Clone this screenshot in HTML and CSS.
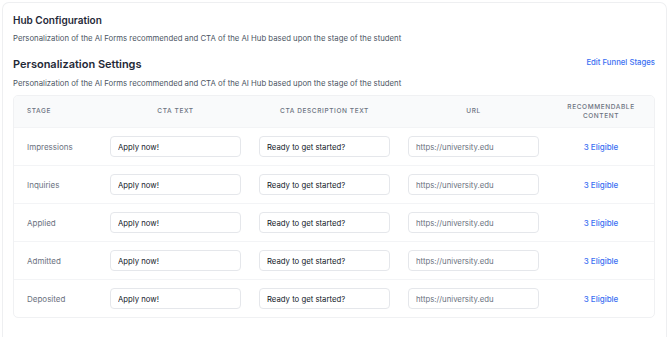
FILE: index.html
```html
<!DOCTYPE html>
<html lang="en">
<head>
    <meta charset="UTF-8">
    <meta name="viewport" content="width=device-width, initial-scale=1.0">
    <title>Hub Configuration</title>
    <link rel="stylesheet" href="styles.css">
</head>
<body>
    <div class="card">
        <h1 class="title">Hub Configuration</h1>
        <p class="desc">Personalization of the AI Forms recommended and CTA of the AI Hub based upon the stage of the student</p>

        <div class="section-head">
            <h2 class="title-lg">Personalization Settings</h2>
            <a href="#" class="link">Edit Funnel Stages</a>
        </div>
        <p class="desc desc-tight">Personalization of the AI Forms recommended and CTA of the AI Hub based upon the stage of the student</p>

        <div class="table-wrap">
            <table class="stages">
                <colgroup>
                    <col class="col-stage">
                    <col class="col-field">
                    <col class="col-field">
                    <col class="col-field">
                    <col>
                </colgroup>
                <thead>
                    <tr>
                        <th class="left">Stage</th>
                        <th>CTA Text</th>
                        <th>CTA Description Text</th>
                        <th>URL</th>
                        <th>Recommendable<br>Content</th>
                    </tr>
                </thead>
                <tbody>
                    <tr>
                        <td class="stage">Impressions</td>
                        <td><input type="text" value="Apply now!"></td>
                        <td><input type="text" value="Ready to get started?"></td>
                        <td><input type="text" class="url" value="https://university.edu"></td>
                        <td class="center"><a href="#" class="link">3 Eligible</a></td>
                    </tr>
                    <tr>
                        <td class="stage">Inquiries</td>
                        <td><input type="text" value="Apply now!"></td>
                        <td><input type="text" value="Ready to get started?"></td>
                        <td><input type="text" class="url" value="https://university.edu"></td>
                        <td class="center"><a href="#" class="link">3 Eligible</a></td>
                    </tr>
                    <tr>
                        <td class="stage">Applied</td>
                        <td><input type="text" value="Apply now!"></td>
                        <td><input type="text" value="Ready to get started?"></td>
                        <td><input type="text" class="url" value="https://university.edu"></td>
                        <td class="center"><a href="#" class="link">3 Eligible</a></td>
                    </tr>
                    <tr>
                        <td class="stage">Admitted</td>
                        <td><input type="text" value="Apply now!"></td>
                        <td><input type="text" value="Ready to get started?"></td>
                        <td><input type="text" class="url" value="https://university.edu"></td>
                        <td class="center"><a href="#" class="link">3 Eligible</a></td>
                    </tr>
                    <tr>
                        <td class="stage">Deposited</td>
                        <td><input type="text" value="Apply now!"></td>
                        <td><input type="text" value="Ready to get started?"></td>
                        <td><input type="text" class="url" value="https://university.edu"></td>
                        <td class="center"><a href="#" class="link">3 Eligible</a></td>
                    </tr>
                </tbody>
            </table>
        </div>
    </div>
</body>
</html>
```

FILE: styles.css
```css
body {
    margin: 0;
    padding: 2px 3px 0 2px;
    background: #ffffff;
    font-family: Inter, "Noto Sans", sans-serif;
    color: #1f2937;
}
.card {
    border: 1px solid #eeeff1;
    border-bottom: none;
    border-radius: 7px 7px 0 0;
    padding: 10px 11px 30px 10px;
    min-height: 320px;
    box-sizing: border-box;
}
.title {
    margin: 0;
    font-size: 10px;
    line-height: 14px;
    font-weight: 600;
}
.desc {
    margin: 5px 0 0;
    font-size: 7.75px;
    line-height: 12px;
    color: #4b5563;
}
.section-head {
    display: flex;
    justify-content: space-between;
    align-items: flex-start;
    margin-top: 12px;
}
.title-lg {
    margin: 0;
    font-size: 11px;
    line-height: 16px;
    font-weight: 600;
}
.link {
    color: #3b6ff2;
    font-size: 8px;
    line-height: 12px;
    font-weight: 500;
    text-decoration: none;
}
.section-head .link {
    font-size: 7.75px;
}
.desc-tight {
    margin-top: 5px;
}
.table-wrap {
    margin-top: 6px;
    border: 1px solid #f0f1f3;
    border-radius: 5px;
    overflow: hidden;
}
.stages {
    width: 100%;
    border-collapse: separate;
    border-spacing: 0;
    table-layout: fixed;
}
.col-stage {
    width: 87px;
}
.col-field {
    width: 149px;
}
.stages th {
    background: #f9fafb;
    height: 31px;
    padding: 0 9px;
    font-size: 6.5px;
    line-height: 9px;
    font-weight: 500;
    letter-spacing: 0.6px;
    text-transform: uppercase;
    color: #6b7280;
    text-align: center;
}
.stages th.left {
    text-align: left;
    padding-left: 13px;
}
.stages td {
    height: 37px;
    padding: 0 9px;
    border-top: 1px solid #f3f4f6;
    font-size: 8px;
}
.stages td.stage {
    padding-left: 13px;
    color: #6b7280;
    font-size: 8px;
}
.stages td.center {
    text-align: center;
}
input {
    display: block;
    width: 100%;
    height: 21px;
    box-sizing: border-box;
    border: 1px solid #e5e7eb;
    border-radius: 4px;
    padding: 0 7px;
    font-family: Inter, "Noto Sans", sans-serif;
    font-size: 7.75px;
    color: #111827;
    background: #ffffff;
}
input.url {
    color: #6b7280;
}
```
